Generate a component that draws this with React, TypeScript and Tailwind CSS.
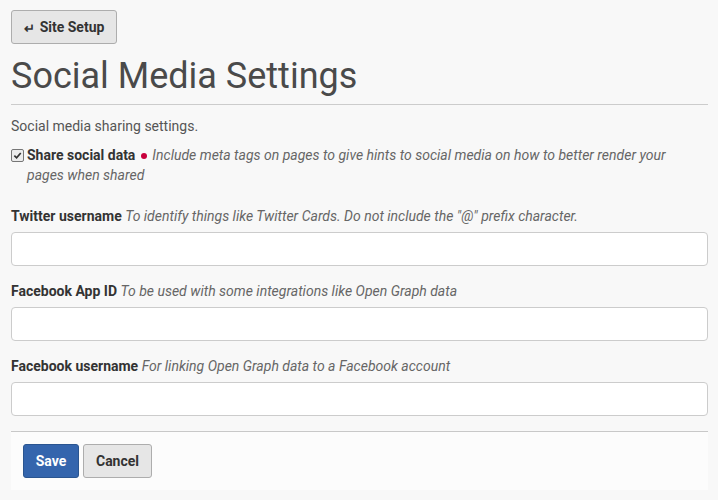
import React from 'react';

const fields = [
  { label: 'Twitter username', hint: 'To identify things like Twitter Cards. Do not include the "@" prefix character.' },
  { label: 'Facebook App ID', hint: 'To be used with some integrations like Open Graph data' },
  { label: 'Facebook username', hint: 'For linking Open Graph data to a Facebook account' },
];

const App: React.FC = () => {
  return (
    <div className="min-h-[500px] bg-[#f8f8f8] pl-[11px] pr-[10px] pt-[10px] font-['Roboto',sans-serif] text-[14px] leading-[20px] text-[#555]">
      {/* Retour */}
      <button className="flex h-[34px] w-[106px] items-center justify-center gap-[5px] rounded-[3px] border border-[#adadad] bg-[#e6e6e6] font-bold text-[#333]">
        <span className="mt-[3px] text-[13px]">↵</span>
        Site Setup
      </button>

      <h1 className="mt-[12px] text-[36px] leading-[40px] text-[#4a4a4a]">Social Media Settings</h1>
      <hr className="mt-[8px] border-t border-[#ccc]" />

      <p className="mt-[11px]">Social media sharing settings.</p>

      <label className="mt-[9px] flex items-start gap-[3px]">
        {/* case cochée, style gris */}
        <span className="mt-[4px] flex h-[13px] w-[13px] shrink-0 items-center justify-center rounded-[2px] border border-[#767676] bg-[#ececec]">
          <svg viewBox="0 0 10 10" className="h-[9px] w-[9px]">
            <path d="M1.5 5.2 L4 7.6 L8.6 2.2" fill="none" stroke="#333" strokeWidth={1.9} />
          </svg>
        </span>
        <span className="max-w-[650px]">
          <b className="text-[#333]">Share social data</b>{' '}
          <span className="mx-[2px] inline-block h-[6px] w-[6px] rounded-full bg-[#c8003c] align-middle" />{' '}
          <i className="text-[#666]">
            Include meta tags on pages to give hints to social media on how to better render your pages when shared
          </i>
        </span>
      </label>

      {/* Champs */}
      <div className="mt-[21px] flex flex-col gap-[15px]">
        {fields.map((f) => (
          <div key={f.label}>
            <div>
              <b className="text-[#333]">{f.label}</b> <i className="text-[#666]">{f.hint}</i>
            </div>
            <input type="text" className="mt-[6px] block h-[34px] w-full rounded-[4px] border border-[#ccc] bg-white px-[12px]" />
          </div>
        ))}
      </div>

      <hr className="mt-[15px] border-t border-[#c8c8c8]" />
      <div className="flex gap-[4px] bg-[#fcfcfc] px-[12px] py-[12px]">
        <button className="h-[34px] w-[56px] rounded-[3px] border border-[#2a5590] bg-[#3465ad] font-bold text-white">Save</button>
        <button className="h-[34px] w-[69px] rounded-[3px] border border-[#adadad] bg-[#e6e6e6] font-bold text-[#333]">Cancel</button>
      </div>
    </div>
  );
};

export default App;
